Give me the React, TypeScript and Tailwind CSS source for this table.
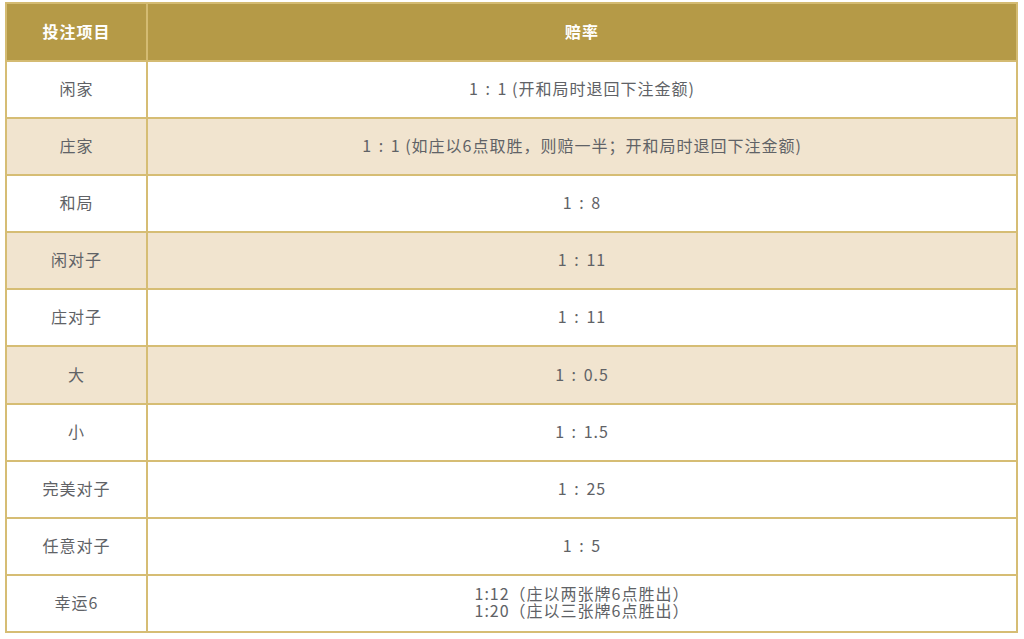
const Ratio = ({ a, b }: { a: string; b: string }) => (
  <>
    {a} <span className="px-[2px]">:</span> {b}
  </>
);

const rows: { name: string; odds: React.ReactNode }[] = [
  { name: '闲家', odds: <><Ratio a="1" b="1" /> (开和局时退回下注金额)</> },
  { name: '庄家', odds: <><Ratio a="1" b="1" /> (如庄以6点取胜，则赔一半；开和局时退回下注金额)</> },
  { name: '和局', odds: <Ratio a="1" b="8" /> },
  { name: '闲对子', odds: <Ratio a="1" b="11" /> },
  { name: '庄对子', odds: <Ratio a="1" b="11" /> },
  { name: '大', odds: <Ratio a="1" b="0.5" /> },
  { name: '小', odds: <Ratio a="1" b="1.5" /> },
  { name: '完美对子', odds: <Ratio a="1" b="25" /> },
  { name: '任意对子', odds: <Ratio a="1" b="5" /> },
  {
    name: '幸运6',
    odds: (
      <div className="leading-[17px]">
        1:12（庄以两张牌6点胜出）
        <br />
        1:20（庄以三张牌6点胜出）
      </div>
    ),
  },
];

// only the 2nd, 4th and 6th body rows are tinted in the reference
const tinted = [1, 3, 5];

export default function App() {
  return (
    <div
      className="bg-white w-[1024px] h-[639px] pl-[5px] pt-[2px]"
      style={{ fontFamily: '"Noto Sans CJK SC", "Noto Sans", sans-serif' }}
    >
      <table className="w-[1013px] border-collapse table-fixed text-[16px] tracking-[1px] text-[#606266]">
        <colgroup>
          <col className="w-[141px]" />
          <col />
        </colgroup>
        <thead>
          <tr className="h-[58px] bg-[#b59a47] text-white font-bold">
            <th className="border-2 border-[#d4bb72] text-center pb-[2px]">投注项目</th>
            <th className="border-2 border-[#d4bb72] text-center pb-[2px]">赔率</th>
          </tr>
        </thead>
        <tbody>
          {rows.map((row, i) => (
            <tr key={i} className={`h-[57.1px] ${tinted.includes(i) ? 'bg-[#f1e4cf]' : 'bg-white'}`}>
              <td className="border-2 border-[#d6bd74] text-center pb-[3px]">{row.name}</td>
              <td className="border-2 border-[#d6bd74] text-center pb-[3px]">{row.odds}</td>
            </tr>
          ))}
        </tbody>
      </table>
    </div>
  );
}
